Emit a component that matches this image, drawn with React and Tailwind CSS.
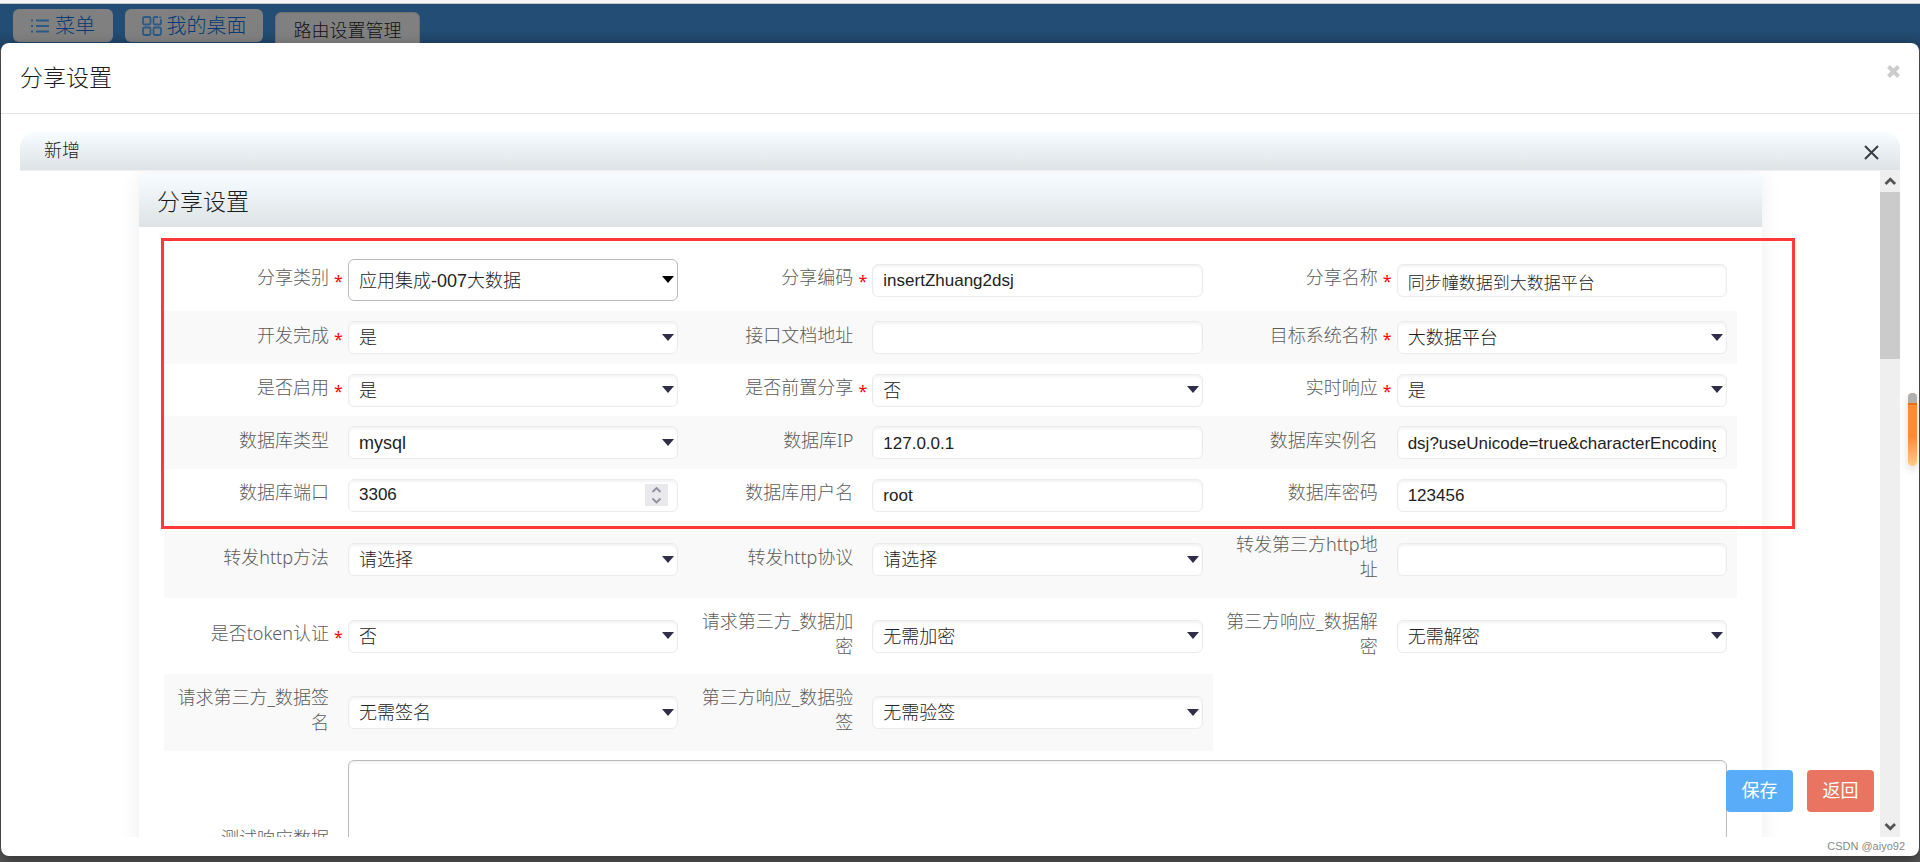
import React from "react";

const FIELD = "block w-full appearance-none rounded-md bg-white px-[10px] text-[#222] outline-none";
const THIN = "h-[33px] border border-[#ebebeb] shadow-[inset_0_2px_3px_rgba(0,0,0,0.05)]";
const LABEL_FONT = "font-['Noto_Sans','Noto_Sans_CJK_SC',sans-serif]";

const rows = [
  {
    size: "h-[62px]",
    cells: [
      { id: "category", label: "分享类别", req: true, type: "select", value: "应用集成-007大数据", big: true },
      { id: "code", label: "分享编码", req: true, type: "text", value: "insertZhuang2dsj" },
      { id: "name", label: "分享名称", req: true, type: "text", value: "同步幢数据到大数据平台" },
    ],
  },
  {
    size: "h-[53px]",
    striped: true,
    cells: [
      { id: "done", label: "开发完成", req: true, type: "select", value: "是" },
      { id: "doc", label: "接口文档地址", type: "text", value: "" },
      { id: "target", label: "目标系统名称", req: true, type: "select", value: "大数据平台" },
    ],
  },
  {
    size: "h-[52px]",
    cells: [
      { id: "enabled", label: "是否启用", req: true, type: "select", value: "是" },
      { id: "pre", label: "是否前置分享", req: true, type: "select", value: "否" },
      { id: "realtime", label: "实时响应", req: true, type: "select", value: "是" },
    ],
  },
  {
    size: "h-[53px]",
    striped: true,
    cells: [
      { id: "dbtype", label: "数据库类型", type: "select", value: "mysql" },
      { id: "dbip", label: "数据库IP", type: "text", value: "127.0.0.1" },
      { id: "dbname", label: "数据库实例名", type: "text", value: "dsj?useUnicode=true&characterEncoding=utf8" },
    ],
  },
  {
    size: "h-[52px]",
    cells: [
      { id: "dbport", label: "数据库端口", type: "number", value: "3306" },
      { id: "dbuser", label: "数据库用户名", type: "text", value: "root" },
      { id: "dbpass", label: "数据库密码", type: "text", value: "123456" },
    ],
  },
  {
    size: "h-[77px]",
    striped: true,
    cells: [
      { id: "method", label: "转发http方法", type: "select", value: "请选择" },
      { id: "protocol", label: "转发http协议", type: "select", value: "请选择" },
      { id: "url", label: "转发第三方http地址", type: "text", value: "" },
    ],
  },
  {
    size: "h-[76px]",
    cells: [
      { id: "token", label: "是否token认证", req: true, type: "select", value: "否" },
      { id: "encrypt", label: "请求第三方_数据加密", type: "select", value: "无需加密" },
      { id: "decrypt", label: "第三方响应_数据解密", type: "select", value: "无需解密" },
    ],
  },
  {
    size: "h-[77px]",
    striped: true,
    cells: [
      { id: "sign", label: "请求第三方_数据签名", type: "select", value: "无需签名" },
      { id: "verify", label: "第三方响应_数据验签", type: "select", value: "无需验签" },
    ],
  },
];

function Control({ cell }) {
  if (cell.type === "select") {
    return (
      <div className="relative">
        <select
          id={cell.id}
          className={`${FIELD} pt-[2px] text-[18px] ${cell.big ? "h-[42px] border border-[#bbb]" : THIN}`}
        >
          <option>{cell.value}</option>
        </select>
        <svg
          className={`pointer-events-none absolute right-1 top-1/2 -mt-1 h-[7px] w-3 ${cell.big ? "text-black" : "text-[#2f2d48]"}`}
          viewBox="0 0 12 7"
          fill="currentColor"
        >
          <path d="M0 0h12L6 7z" />
        </svg>
      </div>
    );
  }
  if (cell.type === "number") {
    return (
      <div className="relative">
        <input
          id={cell.id}
          type="number"
          defaultValue={cell.value}
          className={`${FIELD} ${THIN} text-[17px] [&::-webkit-inner-spin-button]:appearance-none`}
        />
        <svg
          className="pointer-events-none absolute right-[10px] top-[5px] h-[22px] w-[23px] bg-[#e8e8ed]"
          viewBox="0 0 23 22"
          fill="none"
          stroke="#8f8f9d"
          strokeWidth="1.800"
        >
          <path d="M7.500 8l4-4 4 4M7.500 14.500l4 4 4-4" />
        </svg>
      </div>
    );
  }
  return (
    <input id={cell.id} type="text" defaultValue={cell.value} className={`${FIELD} ${THIN} pt-[2px] text-[17px]`} />
  );
}

function Cell({ cell, striped }) {
  return (
    <div className={`flex items-center pr-[10px] ${striped ? "bg-[#f9f9f9]" : ""}`}>
      <label
        htmlFor={cell.id}
        className={`flex w-[184px] shrink-0 items-center pb-[5px] pl-[9px] text-right text-[18px] leading-[25px] text-[#5c5c5c] ${LABEL_FONT}`}
      >
        <span className="flex-1 break-all">{cell.label}</span>
        <span className="w-[19px] pt-[7px] text-center text-[16px] font-normal leading-4 text-[#f00]">
          {cell.req ? "*" : ""}
        </span>
      </label>
      <div className="min-w-0 flex-1">
        <Control cell={cell} />
      </div>
    </div>
  );
}

export default function App() {
  return (
    <div className="flex h-screen flex-col overflow-hidden bg-[#555] font-['Liberation_Sans','Noto_Sans_CJK_SC',sans-serif] font-light text-[#1c1c1c]">
      <div className="h-1 shrink-0 border-b border-[#c9c9cf] bg-[#f6f5f8]" />
      <nav className="-mb-[6px] flex h-[45px] shrink-0 items-start gap-3 bg-gradient-to-b from-[#234d74] from-60% to-[#1f4263] px-[13px] pt-[5px]">
        <button className="flex h-[33px] w-[100px] items-center justify-center gap-[6px] rounded-md bg-[#808080] text-[20px] text-[#063a70]">
          <svg className="h-4 w-[18px]" viewBox="0 0 18 16" fill="none" stroke="#2b5a86" strokeWidth="2">
            <path d="M5 2.500h13M5 8h13M5 13.500h13M0 2.500h2M0 8h2M0 13.500h2" />
          </svg>
          菜单
        </button>
        <button className="flex h-[33px] w-[138px] items-center justify-center gap-[5px] rounded-md bg-[#808080] text-[20px] text-[#063a70]">
          <svg className="size-5" viewBox="0 0 20 20" fill="none" stroke="#2b5a86" strokeWidth="1.800">
            <rect x="1" y="1" width="7.500" height="7.500" rx="1.500" />
            <path d="M19 3v4a1.500 1.500 0 0 1-1.500 1.500H13A1.500 1.500 0 0 1 11.500 7V2.500A1.500 1.500 0 0 1 13 1h3M18.300 0.500v1.500" />
            <rect x="1" y="11.500" width="7.500" height="7.500" rx="1.500" />
            <rect x="11.500" y="11.500" width="7.500" height="7.500" rx="1.500" />
          </svg>
          我的桌面
        </button>
        <button className="mt-[3px] h-[37px] w-[145px] rounded-t-md border border-[#6f6f6f] bg-[#808080] pt-[2px] text-[18px] text-[#111]">
          路由设置管理
        </button>
      </nav>

      <section className="relative mx-px mb-[6px] flex min-h-0 flex-1 flex-col rounded-lg bg-white shadow-[0_5px_15px_rgba(0,0,0,0.4)]">
        <header className="flex h-[71px] shrink-0 items-start justify-between border-b border-[#e5e5e5] px-[19px]">
          <h1 className="pt-[19px] text-[23px] leading-8">分享设置</h1>
          <button aria-label="关闭" className="mt-[22px] text-[#ccc]">
            <svg className="h-[13px] w-[13px]" viewBox="0 0 13 13" stroke="currentColor" strokeWidth="4">
              <path d="M1.500 1.500l10 10M11.500 1.500l-10 10" />
            </svg>
          </button>
        </header>

        <div className="mx-[19px] mb-[19px] mt-[18px] flex min-h-0 flex-1 flex-col">
          <div className="flex h-[39px] shrink-0 items-center justify-between rounded-t-2xl border-b border-[#eef0f1] bg-gradient-to-b from-[#f6fcff] to-[#dee3e6] pl-6 pr-[21px]">
            <h2 className="text-[18px]">新增</h2>
            <button aria-label="关闭新增" className="mt-[2px] text-[#3a3a48]">
              <svg className="size-[15px]" viewBox="0 0 15 15" stroke="currentColor" strokeWidth="2">
                <path d="M1 1l13 13M14 1L1 14" />
              </svg>
            </button>
          </div>

          <div className="relative flex min-h-0 flex-1">
            <div className="min-w-0 flex-1 overflow-hidden pl-[119px] pr-[118px] pt-[3px]">
              <div className="relative h-[900px] bg-white shadow-[0_0_20px_rgba(0,0,0,0.07)]">
                <h2 className="h-[53px] rounded-t bg-gradient-to-b from-[#f6fcff] to-[#dee3e6] pl-[18px] text-[23px] leading-[56px]">
                  分享设置
                </h2>
                <form className="pl-[25px] pr-[25px] pt-[22px]">
                  {rows.map((row) => (
                    <div key={row.cells[0].id} className={`grid grid-cols-3 ${row.size}`}>
                      {row.cells.map((cell) => (
                        <Cell key={cell.id} cell={cell} striped={row.striped} />
                      ))}
                    </div>
                  ))}
                  <div className="flex items-center pr-[10px] pt-[9px]">
                    <label
                      htmlFor="response"
                      className={`w-[184px] shrink-0 pb-[5px] pr-[19px] text-right text-[18px] leading-[25px] text-[#5c5c5c] ${LABEL_FONT}`}
                    >
                      测试响应数据
                    </label>
                    <textarea
                      id="response"
                      className="block h-[162px] min-w-0 flex-1 resize-none rounded-md border border-[#bbb] bg-white p-[10px] shadow-[inset_0_2px_3px_rgba(0,0,0,0.05)] outline-none"
                    />
                  </div>
                </form>
                <div className="pointer-events-none absolute -right-[33px] left-[22px] top-16 h-[291px] border-[3px] border-[#ff3838]" />
              </div>
            </div>

            <div className="flex w-5 shrink-0 flex-col items-center bg-[#efefef] text-[#555]">
              <svg className="h-[21px] w-5 shrink-0" viewBox="0 0 20 21" fill="none" stroke="currentColor" strokeWidth="2.800">
                <path d="M5.500 13l4.800-4.800 4.800 4.800" />
              </svg>
              <div className="h-[167px] w-full bg-[#cbcbcb]" />
              <svg className="mt-auto h-[21px] w-5 shrink-0" viewBox="0 0 20 21" fill="none" stroke="currentColor" strokeWidth="2.800">
                <path d="M5.500 8l4.800 4.800L15 8" />
              </svg>
            </div>

            <div className="absolute bottom-[25px] right-[26px] flex gap-[14px] text-[18px] font-normal text-white">
              <button className="h-[42px] w-[67px] rounded bg-[#59adf8]">保存</button>
              <button className="h-[42px] w-[67px] rounded bg-[#e87461]">返回</button>
            </div>
          </div>
        </div>

        <div className="absolute right-[2px] top-[350px] h-[73px] w-[9px] overflow-hidden rounded-full bg-gradient-to-b from-[#ff8a35] from-60% to-[#ffc98a] shadow-[0_4px_8px_rgba(0,0,0,0.15)]">
          <div className="h-3 border-b-2 border-[#e8701c] bg-[#b0b0b0]" />
        </div>
        <p className="absolute bottom-[2px] right-[14px] text-[11px] leading-4 text-[#888]">CSDN @aiyo92</p>
      </section>
    </div>
  );
}
